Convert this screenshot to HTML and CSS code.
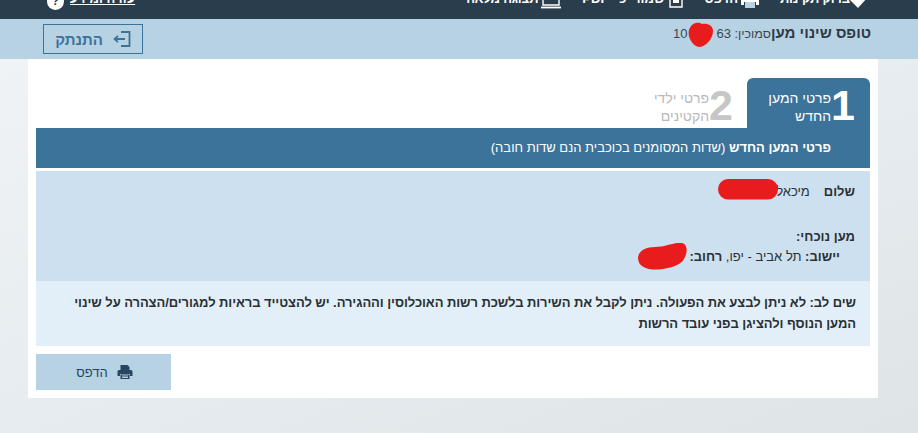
FILE: index.html
```html
<!DOCTYPE html>
<html lang="he" dir="rtl">
<head>
<meta charset="utf-8">
<title>טופס שינוי מען</title>
<link rel="stylesheet" href="styles.css">
</head>
<body>
<nav class="topbar">
  <a class="nav-item nav-check"><svg class="ico" width="18" height="20" viewBox="0 0 18 20"><path d="M0 9l4-4 4 4 6-7 4 4-10 11z" fill="#fff"/></svg>בדוק תקינות</a>
  <a class="nav-item nav-print"><svg class="ico" width="18" height="20" viewBox="0 0 18 20"><path d="M3 0h12v5h1a2 2 0 0 1 2 2v7h-3v-3H3v3H0V7a2 2 0 0 1 2-2h1z" fill="#fff"/><rect x="4" y="11" width="10" height="6" fill="#b7d2e3"/></svg>הדפס</a>
  <a class="nav-item nav-save"><svg class="ico" width="14" height="20" viewBox="0 0 14 20"><path d="M1 1h12v15H1z" fill="none" stroke="#fff" stroke-width="1.400"/><path d="M4 8h6v4H4z" fill="#fff"/></svg>שמור כ- PDF</a>
  <a class="nav-item nav-full"><svg class="ico" width="20" height="20" viewBox="0 0 20 20"><path d="M2 0v14h16V0" fill="none" stroke="#fff" stroke-width="1.400"/><path d="M0 16.500h20" stroke="#fff" stroke-width="1.800"/></svg>תצוגה מלאה</a>
  <a class="nav-help"><u>עזרה ומידע</u><span class="help-dot">?</span></a>
</nav>

<header class="subbar">
  <div class="form-id">
    <h1>טופס שינוי מען</h1>
    <span class="ref"><span class="ref-label">סמוכין: </span><span dir="ltr">10<span class="gap"></span>63</span></span>
  </div>
  <a class="logout">
    <svg width="18" height="16" viewBox="0 0 18 16"><path d="M8 1h8.500v14H8" fill="none" stroke="#3c739a" stroke-width="1.800"/><path d="M12 8H1.500M5 4.800L1.500 8 5 11.200" fill="none" stroke="#3c739a" stroke-width="1.800"/></svg>
    התנתק
  </a>
  <svg class="blob blob-ref" width="26" height="25" viewBox="0 0 26 25"><path d="M2 8C4 1 11-1 15 2c5-1 11 1 11 7 0 7-6 15-13 16C6 25 0 15 2 8z" fill="#e81c1c"/></svg>
</header>

<main class="card">
  <div class="tabs">
    <div class="tab tab-active"><span class="num">1</span><span class="tab-label">פרטי המען החדש</span></div>
    <div class="tab tab-next"><span class="num">2</span><span class="tab-label">פרטי ילדי הקטינים</span></div>
  </div>
  <div class="section-title"><b>פרטי המען החדש</b> (שדות המסומנים בכוכבית הנם שדות חובה)</div>
  <section class="info">
    <p class="hello"><b>שלום</b><span class="name">מיכאל</span></p>
    <p class="addr-title"><b>מען נוכחי:</b></p>
    <p class="addr"><b>יישוב:</b> תל אביב - יפו, <b>רחוב:</b></p>
    <svg class="blob blob-name" width="60" height="21" viewBox="0 0 60 21"><rect x="0" y="0" width="60" height="20.500" rx="10" fill="#e81c1c"/></svg>
    <svg class="blob blob-street" width="49" height="27" viewBox="0 0 49 27"><path d="M0 15C0 8 8 4 17 4c10 0 20-5 27-4 5 1 6 8 3 14-3 8-12 10-22 12C12 28 0 25 0 15z" fill="#e81c1c"/></svg>
  </section>
  <section class="notice">
    <b>שים לב: לא ניתן לבצע את הפעולה. ניתן לקבל את השירות בלשכת רשות האוכלוסין וההגירה. יש להצטייד בראיות למגורים/הצהרה על שינוי המען הנוסף ולהציגן בפני עובד הרשות</b>
  </section>
  <div class="actions">
    <button class="print-btn" type="button">
      <svg width="16" height="16" viewBox="0 0 16 16"><path d="M3.500 1h7L12.500 3v3h-9z" fill="#2a4560"/><path d="M2 6h12a1.500 1.500 0 0 1 1.500 1.500V12H13V10H3v2H.5V7.500A1.500 1.500 0 0 1 2 6z" fill="#2a4560"/><path d="M3.500 10.500h9V15h-9z" fill="#2a4560"/><path d="M5 12h6M5 13.500h6" stroke="#b7d2e3"/></svg>
      <span>הדפס</span>
    </button>
  </div>
</main>
</body>
</html>
```
FILE: styles.css
```css
* { box-sizing: border-box; }
html, body { height: 100%; }
body {
  margin: 0;
  height: 433px;
  overflow: hidden;
  font-family: "Liberation Sans", Arial, sans-serif;
  font-size: 13px;
  color: #333;
  background: linear-gradient(160deg, #f1f4f6 0%, #e6ecf0 55%, #dfe4e6 100%);
}
.topbar {
  height: 19px;
  background: #293d4c;
  display: flex;
  align-items: flex-end;
  overflow: hidden;
  padding: 0 50px 12px 0;
  color: #fff;
  font-weight: 700;
  font-size: 13px;
  line-height: 16px;
}
.nav-item { display: flex; align-items: flex-end; flex: none; margin-left: 21px; }
.ico { flex: none; margin-left: 3px; margin-bottom: -4px; }
.nav-check { letter-spacing: -0.200px; }
.nav-check .ico { margin-left: 0; }
.nav-save { word-spacing: 3px; }
.nav-save .ico { margin-left: 5px; }
.nav-full { margin-left: 0; letter-spacing: -0.200px; }
.nav-help {
  margin-right: auto;
  margin-left: 47px;
  display: flex;
  align-items: flex-end;
  gap: 6px;
}
.help-dot {
  width: 17px;
  height: 17px;
  border-radius: 50%;
  background: #fff;
  color: #293d4c;
  text-align: center;
  font-size: 12px;
  margin-bottom: -3px;
  flex: none;
}
.subbar {
  position: relative;
  height: 40px;
  background: #b7d2e3;
  display: flex;
  align-items: flex-start;
  padding: 0 47px 0 43px;
  justify-content: space-between;
}
.form-id { display: flex; align-items: baseline; margin-top: 4px; }
h1 { margin: 0; font-size: 15px; font-weight: 700; color: #2f3a45; line-height: 20px; }
.ref { font-size: 13px; color: #3b4650; line-height: 16px; }
.ref-label { font-size: 12.500px; }
.gap { display: inline-block; width: 29px; }
.logout {
  width: 100px;
  height: 30px;
  margin-top: 5px;
  border: 1px solid #3c739a;
  color: #3c739a;
  font-weight: 700;
  font-size: 15px;
  display: flex;
  align-items: center;
  justify-content: center;
  gap: 10px;
  flex-direction: row-reverse;
  direction: ltr;
}
.blob { position: absolute; }
.blob-ref { left: 687px; top: 3px; }
.card {
  width: 850px;
  height: 339px;
  margin-right: 40px;
  background: #fff;
  padding: 19px 8px 0;
}
.tabs { display: flex; height: 50px; }
.tab { display: flex; align-items: center; height: 50px; }
.tab-active {
  width: 123px;
  background: #3c739a;
  color: #fff;
  border-radius: 6px 6px 0 0;
  padding-right: 15px;
}
.tab-next {
  width: 105px;
  color: #c6c6c6;
  padding-right: 14px;
}
.num { font-size: 43px; font-weight: 700; line-height: 50px; flex: none; margin-top: 3px; }
.tab-label { font-size: 14px; line-height: 18px; width: 70px; margin-top: 8px; }
.tab-next .tab-label { width: 60px; color: #b9b9b9; }
.section-title {
  height: 40px;
  background: #3c739a;
  color: #fff;
  font-size: 13px;
  line-height: 40px;
  padding-right: 39px;
}
.info {
  position: relative;
  height: 110px;
  margin-top: 3px;
  background: #cde0ef;
  padding: 12px 15px 0;
  color: #2a3036;
  line-height: 18px;
}
.info p { margin: 0; }
.name { margin-right: 14px; }
.addr-title { margin-top: 27px !important; }
.addr { margin-top: 2px !important; padding-right: 15px; }
.blob-name { left: 682px; top: 8px; }
.blob-street { left: 602px; top: 72px; }
.notice {
  height: 65px;
  background: #e2eff8;
  padding: 11px 14px 0 20px;
  color: #2a3036;
  font-size: 13px;
  line-height: 21px;
  letter-spacing: -0.070px;
}
.actions { margin-top: 8px; display: flex; justify-content: flex-end; }
.print-btn {
  width: 135px;
  height: 36px;
  border: 0;
  background: #b7d2e3;
  color: #2a4560;
  font: 13px "Liberation Sans", Arial, sans-serif;
  display: flex;
  align-items: center;
  justify-content: center;
  gap: 9px;
  padding: 0 0 0 2px;
}
```
